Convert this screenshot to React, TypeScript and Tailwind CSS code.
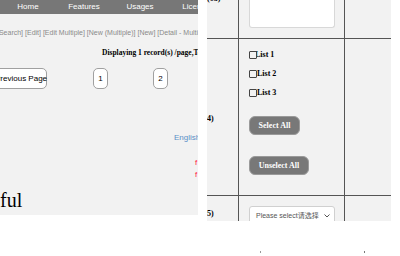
export default function App() {
  const sans = "font-['Liberation_Sans',Arial,sans-serif]"
  const serif = "font-['Liberation_Serif','Times_New_Roman',serif]"
  return (
    <div className="w-[400px] h-[256px] bg-white overflow-hidden">
      <div className="flex items-start gap-[9px]">
        {/* left page */}
        <div className={`w-[198px] h-[215px] bg-[#f2f2f2] overflow-hidden flex flex-col ${sans}`}>
          <div className="h-[14px] bg-[#777777] flex items-center text-[8px] text-white shrink-0 whitespace-nowrap">
            <span className="w-[56px] shrink-0 text-center">Home</span>
            <span className="w-[56px] shrink-0 text-center">Features</span>
            <span className="w-[56px] shrink-0 text-center">Usages</span>
            <span className="w-[56px] shrink-0 text-center">License</span>
          </div>
          <div className="mt-[13px] -ml-[3px] text-[7px] leading-[11px] text-[#8a8a8a] whitespace-nowrap">
            [Search] [Edit] [Edit Multiple] [New (Multiple)] [New] [Detail - Multiple]
          </div>
          <div className={`mt-[10px] ml-[102px] text-[7.5px] leading-[10px] font-bold text-black whitespace-nowrap ${serif}`}>
            Displaying 1 record(s) /page,Total 2 page(s)
          </div>
          <div className="mt-[10px] flex items-center text-[8px] text-black whitespace-nowrap">
            <div className="-ml-[12px] w-[59px] h-[21px] shrink-0 rounded-[5px] border border-[#a0a0a0] bg-white flex items-center justify-start pl-[6px]">
              Previous Page
            </div>
            <div className="ml-[46px] w-[15px] h-[21px] shrink-0 rounded-[5px] border border-[#a0a0a0] bg-white flex items-center justify-center">
              1
            </div>
            <div className="ml-[45px] w-[15px] h-[21px] shrink-0 rounded-[5px] border border-[#a0a0a0] bg-white flex items-center justify-center">
              2
            </div>
          </div>
          <div className="mt-[44px] ml-[174px] text-[8px] leading-[10px] text-[#5b8fc7] whitespace-nowrap">English 中文</div>
          <div className="mt-[15px] ml-[195px] flex flex-col gap-[2px] text-[8px] leading-[10px] text-[#ff1a40] whitespace-nowrap">
            <span>f</span>
            <span>f</span>
          </div>
          <div className={`mt-[8px] text-[20px] leading-[24px] text-black whitespace-nowrap ${serif}`}>ful</div>
        </div>

        {/* right page: form table */}
        <div className={`w-[184px] h-[221px] bg-[#f2f2f2] overflow-hidden ${serif}`}>
          <div className="grid grid-cols-[31px_1px_105px_1px_46px] grid-rows-[38px_1px_156px_1px_26px]">
            <div className="overflow-hidden">
              <div className="-mt-[6px] text-[8px] font-bold leading-[10px] whitespace-nowrap">(03)</div>
            </div>
            <div className="bg-[#555]" />
            <div className="pl-[10px]">
              <div className="w-[86px] h-[28px] bg-white border border-[#d8d8d8] border-t-0 rounded-b-[3px]" />
            </div>
            <div className="bg-[#555]" />
            <div />

            <div className="col-span-5 bg-[#555]" />

            <div className="overflow-hidden flex items-center">
              <div className="-ml-[4px] mt-[3px] text-[8px] font-bold leading-[10px] whitespace-nowrap">04)</div>
            </div>
            <div className="bg-[#555]" />
            <div className="pl-[10px] pt-[11px] flex flex-col text-[8px] font-bold leading-[10px]">
              <label className="h-[10px] flex items-center">
                <span className="relative z-10 w-[8px] h-[8px] border border-[#444] bg-[#f2f2f2] rounded-[1px]" />
                <span className="-ml-[2px]">List 1</span>
              </label>
              <label className="mt-[9px] h-[10px] flex items-center">
                <span className="w-[8px] h-[8px] border border-[#444] rounded-[1px]" />
                <span>List 2</span>
              </label>
              <label className="mt-[9px] h-[10px] flex items-center">
                <span className="w-[8px] h-[8px] border border-[#444] rounded-[1px]" />
                <span>List 3</span>
              </label>
              <button className="mt-[18px] w-[51px] h-[19px] rounded-[6px] bg-[#787878] border border-[#9a9a9a] text-white text-[8px] font-bold">
                Select All
              </button>
              <button className="mt-[21px] w-[60px] h-[19px] rounded-[6px] bg-[#787878] border border-[#9a9a9a] text-white text-[8px] font-bold">
                Unselect All
              </button>
            </div>
            <div className="bg-[#555]" />
            <div />

            <div className="col-span-5 bg-[#555]" />

            <div className="overflow-hidden flex items-center">
              <div className="-ml-[4px] mt-[10px] text-[8px] font-bold leading-[10px] whitespace-nowrap">05)</div>
            </div>
            <div className="bg-[#555]" />
            <div className="pl-[10px] pt-[10px]">
              <div className="w-[86px] h-[20px] bg-white border border-[#d0d0d0] rounded-[3px] flex items-center pl-[6px] pr-[4px] text-[7px] text-[#555] font-['Liberation_Sans','Noto_Sans_CJK_SC',sans-serif]">
                <span className="flex-1 whitespace-nowrap">Please select请选择</span>
                <svg width="6" height="4" viewBox="0 0 6 4" fill="none" stroke="#555" strokeWidth="1">
                  <path d="M0.5 0.5 L3 3 L5.5 0.5" />
                </svg>
              </div>
            </div>
            <div className="bg-[#555]" />
            <div />
          </div>
        </div>
      </div>
      <div className="mt-[30px] flex">
        <span className="ml-[260px] w-[1px] h-[2px] bg-[#999]" />
        <span className="ml-[103px] w-[1px] h-[2px] bg-[#777]" />
      </div>
    </div>
  )
}
